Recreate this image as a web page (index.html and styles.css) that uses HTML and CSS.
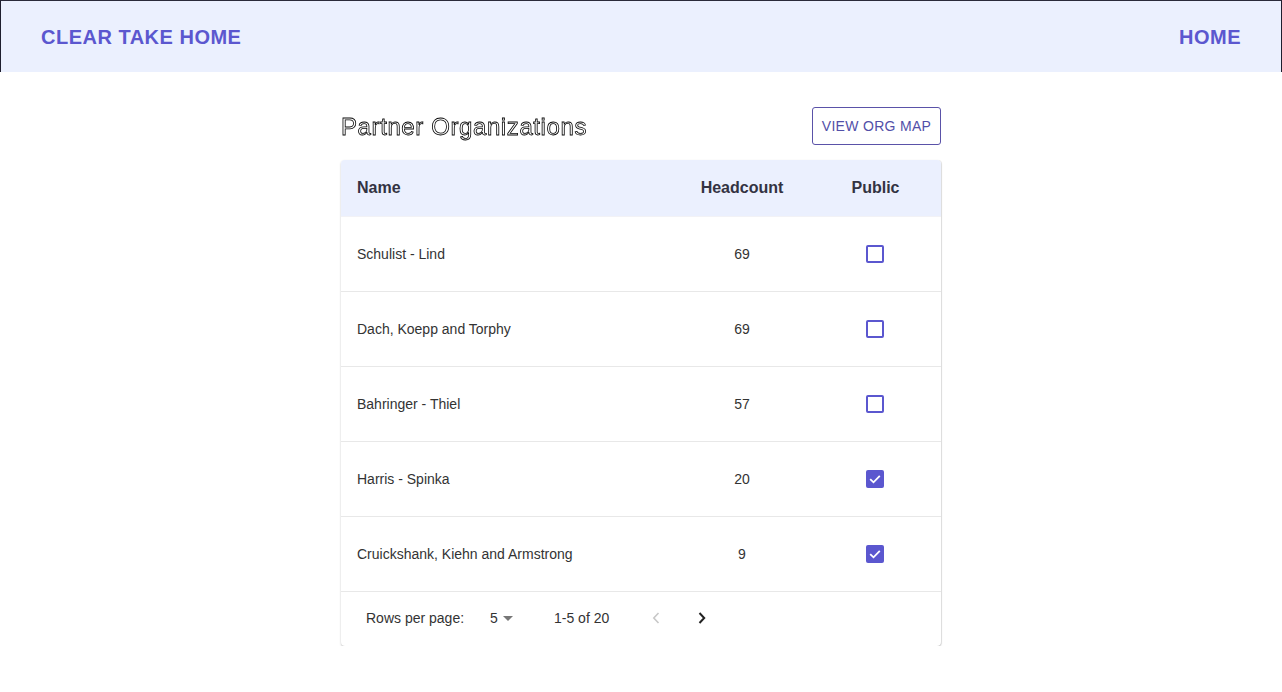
FILE: index.html
```html
<!DOCTYPE html>
<html>
<head>
<meta charset="utf-8">
<link rel="stylesheet" href="styles.css">
</head>
<body>
<header class="topbar">
  <a class="brand">CLEAR TAKE HOME</a>
  <a class="nav">HOME</a>
</header>
<main class="content">
  <div class="titlebar">
    <h1 class="title">Partner Organizations</h1>
    <button class="outline-btn">VIEW ORG MAP</button>
  </div>
  <div class="card">
    <div class="row head">
      <div class="c-name">Name</div>
      <div class="c-count">Headcount</div>
      <div class="c-pub">Public</div>
    </div>
    <div class="row">
      <div class="c-name">Schulist - Lind</div>
      <div class="c-count">69</div>
      <div class="c-pub"><span class="box"></span></div>
    </div>
    <div class="row">
      <div class="c-name">Dach, Koepp and Torphy</div>
      <div class="c-count">69</div>
      <div class="c-pub"><span class="box"></span></div>
    </div>
    <div class="row">
      <div class="c-name">Bahringer - Thiel</div>
      <div class="c-count">57</div>
      <div class="c-pub"><span class="box"></span></div>
    </div>
    <div class="row">
      <div class="c-name">Harris - Spinka</div>
      <div class="c-count">20</div>
      <div class="c-pub"><span class="box checked"><svg viewBox="0 0 18 18" width="18" height="18"><path d="M4.2 9.2 L7.5 12.3 L13.8 5.8" fill="none" stroke="#fff" stroke-width="1.8"/></svg></span></div>
    </div>
    <div class="row">
      <div class="c-name">Cruickshank, Kiehn and Armstrong</div>
      <div class="c-count">9</div>
      <div class="c-pub"><span class="box checked"><svg viewBox="0 0 18 18" width="18" height="18"><path d="M4.2 9.2 L7.5 12.3 L13.8 5.8" fill="none" stroke="#fff" stroke-width="1.8"/></svg></span></div>
    </div>
    <div class="pager">
      <span class="rpp">Rows per page:</span>
      <span class="sel">5 <svg width="10" height="6" viewBox="0 0 10 6"><path d="M0 0 L10 0 L5 5 Z" fill="#777"/></svg></span>
      <span class="range">1-5 of 20</span>
      <span class="prev"><svg width="8" height="12" viewBox="0 0 8 12"><path d="M6.5 1 L1.8 6 L6.5 11" fill="none" stroke="#c8c8c8" stroke-width="1.6"/></svg></span>
      <span class="next"><svg width="8" height="12" viewBox="0 0 8 12"><path d="M1.5 1 L6.2 6 L1.5 11" fill="none" stroke="#222" stroke-width="2"/></svg></span>
    </div>
  </div>
</main>
</body>
</html>
```
FILE: styles.css
```css
html, body {
  margin: 0;
  padding: 0;
  background: #fff;
  font-family: "Liberation Sans", Arial, sans-serif;
}
.topbar {
  box-sizing: border-box;
  height: 72px;
  background: #ebf0fe;
  border-top: 1px solid #2a2a3a;
  border-left: 1px solid #1e1e2e;
  border-right: 1px solid #1e1e2e;
  display: flex;
  align-items: center;
  justify-content: space-between;
  padding: 2px 40px 0;
}
.brand, .nav {
  font-size: 20px;
  font-weight: bold;
  letter-spacing: 0.5px;
  color: #5b57cf;
  text-decoration: none;
}
.content {
  width: 600px;
  margin: 0 auto;
  padding-top: 35px;
}
.titlebar {
  display: flex;
  justify-content: space-between;
  align-items: center;
  height: 38px;
  margin-bottom: 15px;
}
.title {
  margin: 0;
  font-size: 24px;
  font-weight: normal;
  color: #fff;
  -webkit-text-stroke: 0.8px #000;
  letter-spacing: 0.6px;
  will-change: transform;
  padding-top: 2px;
}
.outline-btn {
  height: 38px;
  width: 129px;
  padding: 0;
  background: #fff;
  border: 1px solid #5a52a8;
  border-radius: 3px;
  color: #524fa8;
  font-family: "Liberation Sans", Arial, sans-serif;
  font-size: 14px;
  letter-spacing: 0.3px;
}
.card {
  border-radius: 4px;
  box-shadow: 0 1px 2px rgba(0,0,0,0.25), 1px 0 0 #eee;
  overflow: hidden;
}
.row {
  display: flex;
  align-items: center;
  height: 75px;
  border-bottom: 1px solid #e8e8e8;
  box-sizing: border-box;
  font-size: 14px;
  color: #333;
}
.row.head {
  height: 57px;
  background: #ebf0fe;
  font-size: 16px;
  font-weight: bold;
  color: #333342;
  border-bottom: 1px solid #f2f2f6;
}
.row > div { box-sizing: border-box; }
.c-name {
  width: 326px;
  padding-left: 16px;
}
.c-count {
  width: 150px;
  text-align: center;
}
.c-pub {
  width: 116px;
  display: flex;
  justify-content: center;
}
.row.head .c-pub { padding-left: 1px; }
.box {
  width: 18px;
  height: 18px;
  box-sizing: border-box;
  border: 2px solid #5b57cf;
  border-radius: 2px;
  display: block;
}
.box.checked {
  background: #5b57cf;
  border: none;
}
.box svg { display: block; }
.pager {
  height: 54px;
  box-sizing: border-box;
  padding-bottom: 2px;
  display: flex;
  align-items: center;
  font-size: 14px;
  color: #333;
  padding-left: 25px;
}
.rpp { width: 124px; }
.sel {
  width: 64px;
  display: flex;
  align-items: center;
  gap: 5px;
}
.sel svg { margin-top: 1px; }
.range { width: 98px; }
.prev { width: 46px; display: flex; }
.next { display: flex; }
```
